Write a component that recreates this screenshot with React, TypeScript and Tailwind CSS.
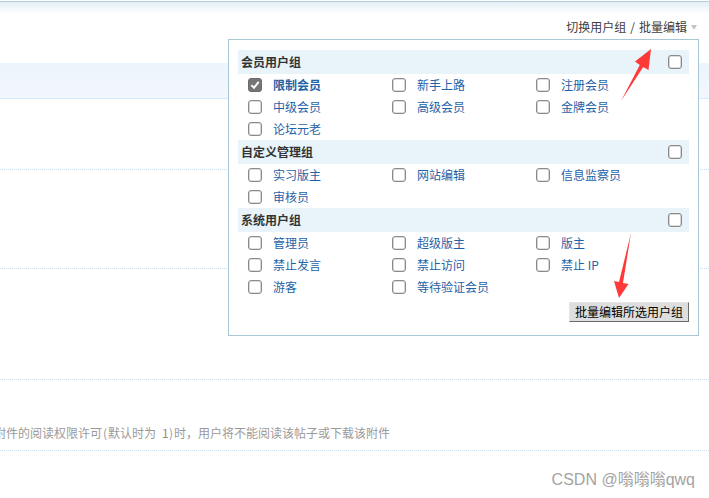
import React from "react";

type Item = { label: string; checked?: boolean; bold?: boolean };
type Section = { title: string; items: Item[] };

const sections: Section[] = [
  {
    title: "会员用户组",
    items: [
      { label: "限制会员", checked: true, bold: true },
      { label: "新手上路" },
      { label: "注册会员" },
      { label: "中级会员" },
      { label: "高级会员" },
      { label: "金牌会员" },
      { label: "论坛元老" },
    ],
  },
  {
    title: "自定义管理组",
    items: [
      { label: "实习版主" },
      { label: "网站编辑" },
      { label: "信息监察员" },
      { label: "审核员" },
    ],
  },
  {
    title: "系统用户组",
    items: [
      { label: "管理员" },
      { label: "超级版主" },
      { label: "版主" },
      { label: "禁止发言" },
      { label: "禁止访问" },
      { label: "禁止 IP" },
      { label: "游客" },
      { label: "等待验证会员" },
    ],
  },
];

function Box({ checked }: { checked?: boolean }) {
  if (checked) {
    return (
      <span className="flex h-[14px] w-[14px] shrink-0 items-center justify-center rounded-[3px] border border-[#6b6b6b] bg-[#767676]">
        <svg width="10" height="10" viewBox="0 0 9 9">
          <path d="M1.2 4.6 L3.6 7 L7.8 1.6" fill="none" stroke="#fff" strokeWidth="1.8" />
        </svg>
      </span>
    );
  }
  return (
    <span className="block h-[14px] w-[14px] shrink-0 rounded-[3px] border border-[#8a8a8a] bg-white shadow-[inset_0_0_0_0.6px_#bdbdbd]" />
  );
}

export default function App() {
  return (
    <div className="relative h-[498px] w-[709px] overflow-hidden bg-white font-['Noto_Sans_CJK_SC',sans-serif] text-[12px]">
      {/* top strip */}
      <div className="mt-[1px] h-[13px] border-t border-[#b3cdd9] bg-gradient-to-b from-[#e3eff6] to-white" />

      {/* header link */}
      <div className="flex h-[25px] items-center justify-end pr-[12px] text-[#3d3d3d] leading-none">
        <span>切换用户组</span>
        <span className="mx-[4px]">/</span>
        <span>批量编辑</span>
        <span className="ml-[4px] mt-[1px] block h-0 w-0 border-x-[3px] border-t-[5px] border-x-transparent border-t-[#c4c4c4]" />
      </div>

      {/* background list */}
      <div className="h-[24px]" />
      <div className="h-[36px] border-b border-dotted border-[#c7def0] bg-gradient-to-b from-[#ecf4fc] to-[#f2f7fd]" />
      <div className="h-[71px] border-b border-dotted border-[#c7def0]" />
      <div className="h-[99px] border-b border-dotted border-[#c7def0]" />
      <div className="h-[111px] border-b border-dotted border-[#c7def0]" />
      <div className="flex h-[71px] items-end border-b border-dotted border-[#c7def0] pb-[11px]">
        <span className="ml-[-6px] flex whitespace-nowrap leading-none text-[#9a9a9a]">
          <span>附件的阅读权限许可</span>
          <span className="inline-block w-[6px] text-center">(</span>
          <span>默认时为</span>
          <span className="inline-block w-[6px]" />
          <span className="inline-block w-[6px] text-center text-[#a08a6a]">1</span>
          <span className="inline-block w-[6px] text-center">)</span>
          <span>时，用户将不能阅读该帖子或下载该附件</span>
        </span>
      </div>
      <div className="flex justify-end pr-[14px] pt-[21px]">
        <span className="font-['Liberation_Sans','Noto_Sans_CJK_SC',sans-serif] text-[16px] leading-none text-[#a3a3a3]">
          CSDN @嗡嗡嗡qwq
        </span>
      </div>

      {/* dropdown panel */}
      <div className="absolute left-[228px] top-[39px] h-[297px] w-[471px] border border-[#a9c6d5] bg-white px-[9px] pt-[10px]">
        {sections.map((s, si) => (
          <div key={si}>
            <div className="flex h-[24px] items-center justify-between bg-[#e8f3fa] pl-[3px] pr-[7px]">
              <span className="font-bold leading-none text-[#333]">{s.title}</span>
              <Box />
            </div>
            <div className="grid grid-cols-[144px_144px_144px] pl-[10px]">
              {s.items.map((it, i) => (
                <div key={i} className="flex h-[22px] items-center gap-[11px]">
                  <Box checked={it.checked} />
                  <span
                    className={`leading-none text-[#1f62a6] ${it.bold ? "font-bold" : ""}`}
                  >
                    {it.label}
                  </span>
                </div>
              ))}
            </div>
          </div>
        ))}
        <div className="mt-[4px] flex justify-end">
          <button className="flex h-[20px] items-center border border-b-[#6a6a6a] border-l-[#e6e6e6] border-r-[#6a6a6a] border-t-[#e6e6e6] bg-[#dedede] px-[5px] leading-none text-black">
            批量编辑所选用户组
          </button>
        </div>
      </div>

      {/* red arrows */}
      <svg className="pointer-events-none absolute left-0 top-0" width="709" height="498">
        <polygon
          points="651,49 648.5,70 643.2,67 621,101 639.8,65 635,61.5"
          fill="#ff3838"
        />
        <polygon
          points="619,298 628.5,284 623,283 631,233 619,282 614,281"
          fill="#ff3838"
        />
      </svg>
    </div>
  );
}
